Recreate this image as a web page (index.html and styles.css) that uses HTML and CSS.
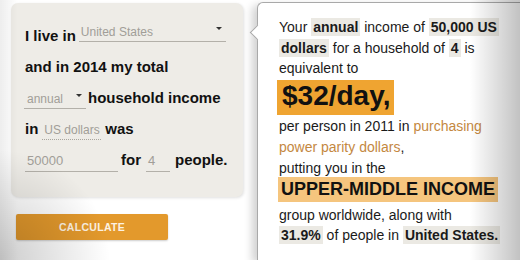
FILE: index.html
```html
<!DOCTYPE html>
<html lang="en">
<head>
<meta charset="utf-8">
<title>Income calculator</title>
<link rel="stylesheet" href="styles.css">
</head>
<body>
<div class="page">
  <div class="left">
    <div class="form">
      <div class="row"><span class="lbl">I live in</span><span class="field sel country">United States<i class="caret"></i></span></div>
      <div class="row"><span class="lbl">and in 2014 my total</span></div>
      <div class="row"><span class="field sel period">annual<i class="caret"></i></span><span class="lbl">household income</span></div>
      <div class="row"><span class="lbl">in</span><span class="field currency">US dollars</span><span class="lbl">was</span></div>
      <div class="row"><span class="field num amount">50000</span><span class="lbl">for</span><span class="field num people">4</span><span class="lbl">people.</span></div>
    </div>
    <div class="calc">CALCULATE</div>
  </div>
  <div class="result">
    <p class="p1">Your <span class="hl">annual</span> income of <span class="hl">50,000 US</span><br><span class="hl">dollars</span> for a household of <span class="hl">4</span> is<br>equivalent to</p>
    <div class="big">$32/day,</div>
    <p class="p2">per person in 2011 in <span class="or">purchasing</span><br><span class="or">power parity dollars</span>,<br>putting you in the</p>
    <div class="tier">UPPER-MIDDLE INCOME</div>
    <p class="p3">group worldwide, along with<br><span class="hl">31.9%</span> of people in <span class="hl">United States.</span></p>
  </div>
</div>
</body>
</html>
```
FILE: styles.css
```css
html, body {
  margin: 0;
  padding: 0;
}
body {
  width: 520px;
  height: 260px;
  overflow: hidden;
  background: #ffffff;
  position: relative;
  font-family: "Liberation Sans", Arial, sans-serif;
}
body::after {
  content: "";
  position: absolute;
  inset: 0;
  pointer-events: none;
  background:
    radial-gradient(circle at 0 100%, rgba(0,0,0,0.20), rgba(0,0,0,0) 110px),
    linear-gradient(to right, rgba(0,0,0,0.07) 0, rgba(0,0,0,0) 18px, rgba(0,0,0,0) 470px, rgba(0,0,0,0.24) 520px);
}
.page {
  display: flex;
  align-items: flex-start;
}
.left {
  flex-shrink: 0;
  width: 232px;
  margin: 3px 0 0 11px;
}
.form {
  box-sizing: border-box;
  height: 194px;
  padding: 17px 0 0 14px;
  background: #eeece7;
  border-radius: 7px;
  box-shadow: 1px 1px 3px rgba(0,0,0,0.12);
  font-weight: bold;
  font-size: 15px;
  line-height: 31px;
  color: #111;
}
.row {
  height: 31px;
  white-space: nowrap;
}
.field {
  display: inline-block;
  box-sizing: border-box;
  position: relative;
  font-weight: 400;
  font-size: 12px;
  line-height: 14px;
  color: #a19e98;
  padding: 0 0 2px 2px;
  border-bottom: 1px solid #b3b0a9;
}
.country {
  width: 147px;
  margin-left: 3px;
  vertical-align: 5px;
}
.period {
  width: 62px;
  margin-right: 2px;
  padding-left: 3px;
  margin-left: -1px;
}
.currency {
  width: 59px;
  margin: 0 4px 0 4px;
  border-bottom: 1px dotted #a9a69f;
}
.num {
  font-size: 13px;
  padding-bottom: 3px;
}
.amount {
  width: 93px;
  margin-right: 3px;
}
.people {
  width: 24px;
  margin: 0 5px 0 5px;
}
.caret {
  position: absolute;
  right: 4px;
  top: 2px;
  width: 0;
  height: 0;
  border-left: 3px solid transparent;
  border-right: 3px solid transparent;
  border-top: 3px solid #333;
}
.calc {
  box-sizing: border-box;
  width: 152px;
  height: 26px;
  margin: 17px 0 0 5px;
  background: #e3992c;
  border-radius: 2px;
  box-shadow: 0 1px 2px rgba(0,0,0,0.2);
  color: #fdf2e2;
  font-weight: bold;
  font-size: 10.5px;
  letter-spacing: 0.3px;
  display: flex;
  align-items: center;
  justify-content: center;
}
.result {
  flex-shrink: 0;
  position: relative;
  box-sizing: border-box;
  width: 263px;
  height: 258px;
  margin: 2px 0 0 14px;
  padding: 14px 0 0 21px;
  background: #fff;
  border: 1px solid #a9a9a9;
  border-right: 0;
  border-bottom: 0;
  border-radius: 6px 0 0 0;
  box-shadow: -5px 3px 8px rgba(0,0,0,0.18);
  font-size: 14px;
  color: #1a1a1a;
  white-space: nowrap;
}
.result::before {
  content: "";
  position: absolute;
  left: -6px;
  top: 24px;
  width: 10px;
  height: 10px;
  background: #fff;
  border-left: 1px solid #a9a9a9;
  border-bottom: 1px solid #a9a9a9;
  transform: rotate(45deg);
}
.result p {
  margin: 0;
}
.p1 {
  line-height: 20.5px;
}
.hl {
  background: #ebe9e3;
  font-weight: bold;
  padding: 1px 2px;
}
.big {
  width: fit-content;
  box-sizing: border-box;
  height: 35px;
  margin: 1.5px 0 0 -2px;
  padding: 0 4px 0 5px;
  background: #efa431;
  font-weight: bold;
  font-size: 28px;
  line-height: 31px;
  color: #111;
}
.p2 {
  margin-top: 1px !important;
  line-height: 21px;
}
.or {
  color: #c4883f;
}
.tier {
  width: fit-content;
  height: 25px;
  margin: -2px 0 0 -1px;
  padding: 0 3px;
  background: #f5c57e;
  font-weight: bold;
  font-size: 18px;
  line-height: 25px;
  color: #111;
}
.p3 {
  margin-top: 3px !important;
  line-height: 20px;
}
```
